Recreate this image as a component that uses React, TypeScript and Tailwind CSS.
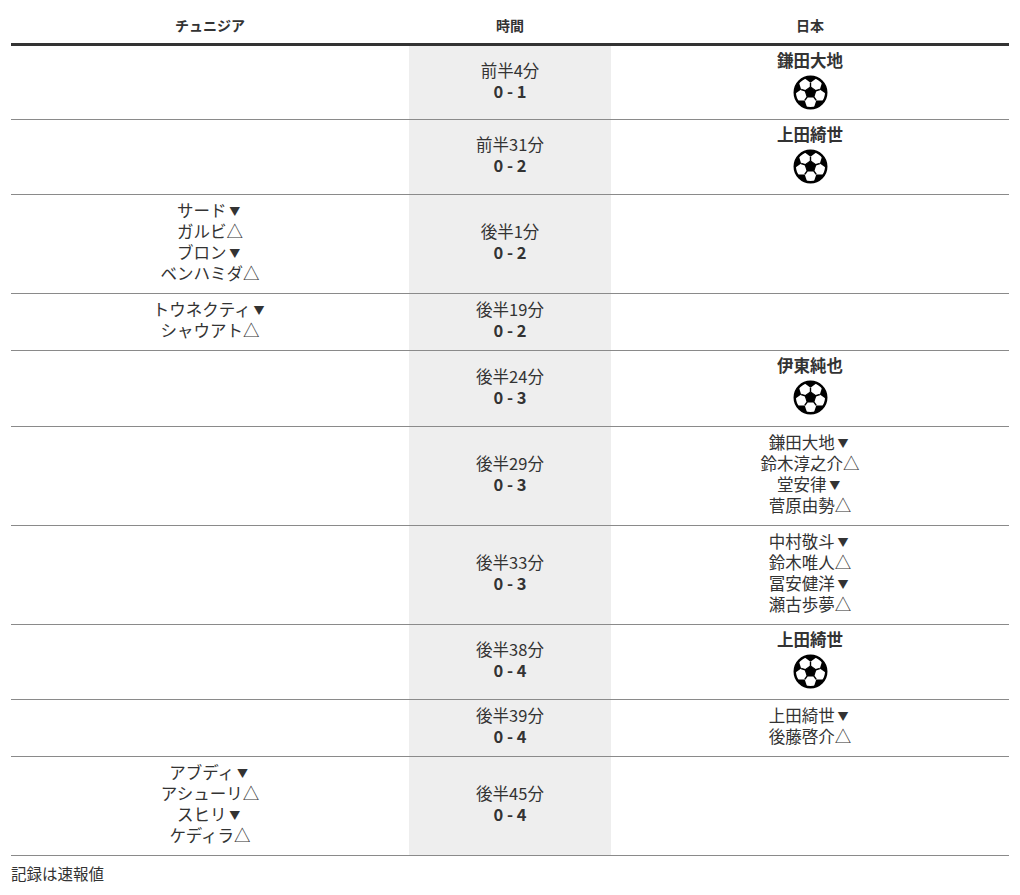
import React, { useId } from "react";

type Row = {
  left?: string[];
  time: string;
  score: string;
  goal?: string;
  right?: string[];
  gpb?: string;
};

const rows: Row[] = [
  { time: "前半4分", score: "0 - 1", goal: "鎌田大地", gpb: "pb-[9px]" },
  { time: "前半31分", score: "0 - 2", goal: "上田綺世" },
  { left: ["サード▼", "ガルビ△", "ブロン▼", "ベンハミダ△"], time: "後半1分", score: "0 - 2" },
  { left: ["トウネクティ▼", "シャウアト△"], time: "後半19分", score: "0 - 2" },
  { time: "後半24分", score: "0 - 3", goal: "伊東純也", gpb: "pb-[11px]" },
  { time: "後半29分", score: "0 - 3", right: ["鎌田大地▼", "鈴木淳之介△", "堂安律▼", "菅原由勢△"] },
  { time: "後半33分", score: "0 - 3", right: ["中村敬斗▼", "鈴木唯人△", "冨安健洋▼", "瀬古歩夢△"] },
  { time: "後半38分", score: "0 - 4", goal: "上田綺世" },
  { time: "後半39分", score: "0 - 4", right: ["上田綺世▼", "後藤啓介△"] },
  { left: ["アブディ▼", "アシューリ△", "スヒリ▼", "ケディラ△"], time: "後半45分", score: "0 - 4" },
];

function Ball() {
  const id = useId().replace(/:/g, "");
  const C = 50;
  const rad = (d: number) => (d * Math.PI) / 180;
  const pt = (r: number, a: number) => [C + r * Math.cos(rad(a)), C + r * Math.sin(rad(a))];
  const r0 = 16;
  const center = [0, 1, 2, 3, 4].map((k) => pt(r0, 270 + 72 * k));
  const patches: number[][][] = [];
  const seams: number[][] = [];
  const sideLines: number[][] = [];
  for (let k = 0; k < 5; k++) {
    const a = 270 + 72 * k;
    const c = 45;
    const s = 17;
    const pc = pt(c, a);
    const poly = [0, 1, 2, 3, 4].map((j) => {
      const ang = a + 180 + 72 * j;
      return [pc[0] + s * Math.cos(rad(ang)), pc[1] + s * Math.sin(rad(ang))];
    });
    patches.push(poly);
    const v = center[k];
    seams.push([v[0], v[1], poly[0][0], poly[0][1]]);
    [poly[1], poly[4]].forEach((p) => {
      const dx = p[0] - C;
      const dy = p[1] - C;
      const len = Math.sqrt(dx * dx + dy * dy);
      sideLines.push([p[0], p[1], C + (dx / len) * 50, C + (dy / len) * 50]);
    });
  }
  const toStr = (pts: number[][]) => pts.map((p) => `${p[0].toFixed(2)},${p[1].toFixed(2)}`).join(" ");
  return (
    <svg width="35" height="35" viewBox="0 0 100 100" className="block">
      <defs>
        <clipPath id={`c${id}`}>
          <circle cx="50" cy="50" r="46" />
        </clipPath>
      </defs>
      <circle cx="50" cy="50" r="46" fill="#fff" />
      <g clipPath={`url(#c${id})`}>
        {patches.map((p, i) => (
          <polygon key={i} points={toStr(p)} fill="#000" />
        ))}
        {seams.map((l, i) => (
          <line key={`s${i}`} x1={l[0]} y1={l[1]} x2={l[2]} y2={l[3]} stroke="#000" strokeWidth="4" />
        ))}
        {sideLines.map((l, i) => (
          <line key={`t${i}`} x1={l[0]} y1={l[1]} x2={l[2]} y2={l[3]} stroke="#000" strokeWidth="4" />
        ))}
      </g>
      <polygon points={toStr(center)} fill="#000" stroke="#000" strokeWidth="3" strokeLinejoin="round" />
      <circle cx="50" cy="50" r="45" fill="none" stroke="#000" strokeWidth="7" />
    </svg>
  );
}

function Names({ names }: { names: string[] }) {
  return (
    <div className="flex flex-col items-center">
      {names.map((n, i) => {
        const last = n.slice(-1);
        const base = n.slice(0, -1);
        return (
          <div key={i} className="leading-[21px] whitespace-nowrap">
            {base}
            {last === "▼" ? (
              <span className="inline-block w-[16.5px] text-center text-[11px] leading-[21px] align-top translate-y-[1px]">▼</span>
            ) : (
              <span>{last}</span>
            )}
          </div>
        );
      })}
    </div>
  );
}

export default function App() {
  return (
    <div
      className="bg-white text-[#333] px-[11px] min-h-[895px]"
      style={{ fontFamily: '"Noto Sans CJK JP", "Noto Sans", sans-serif' }}
    >
      <div className="grid grid-cols-[398px_202px_398px] border-b-[3px] border-[#333] text-[14px] font-bold">
        <div className="text-center pt-[15px] pb-[8px] leading-[20px]">チュニジア</div>
        <div className="text-center pt-[15px] pb-[8px] leading-[20px]">時間</div>
        <div className="text-center pt-[15px] pb-[8px] leading-[20px]">日本</div>
      </div>
      {rows.map((r, i) => (
        <div key={i} className="grid grid-cols-[398px_202px_398px] border-b border-[#8a8a8a] text-[16.5px]">
          <div className="flex items-center justify-center pt-[5px] pb-[9px]">
            {r.left && <Names names={r.left} />}
          </div>
          <div className="flex flex-col items-center justify-center bg-[#eeeeee] pt-[5px] pb-[9px] leading-[21px]">
            <div>{r.time}</div>
            <div className="font-bold">{r.score}</div>
          </div>
          <div className="flex items-center justify-center">
            {r.goal && (
              <div className={`flex flex-col items-center pt-[4px] ${r.gpb ?? "pb-[10px]"}`}>
                <div className="font-bold leading-[21px]">{r.goal}</div>
                <div className="mt-[4px]">
                  <Ball />
                </div>
              </div>
            )}
            {r.right && (
              <div className="pt-[5px] pb-[9px]">
                <Names names={r.right} />
              </div>
            )}
          </div>
        </div>
      ))}
      <div className="pt-[7px] text-[15.5px] leading-[21px]">記録は速報値</div>
    </div>
  );
}
